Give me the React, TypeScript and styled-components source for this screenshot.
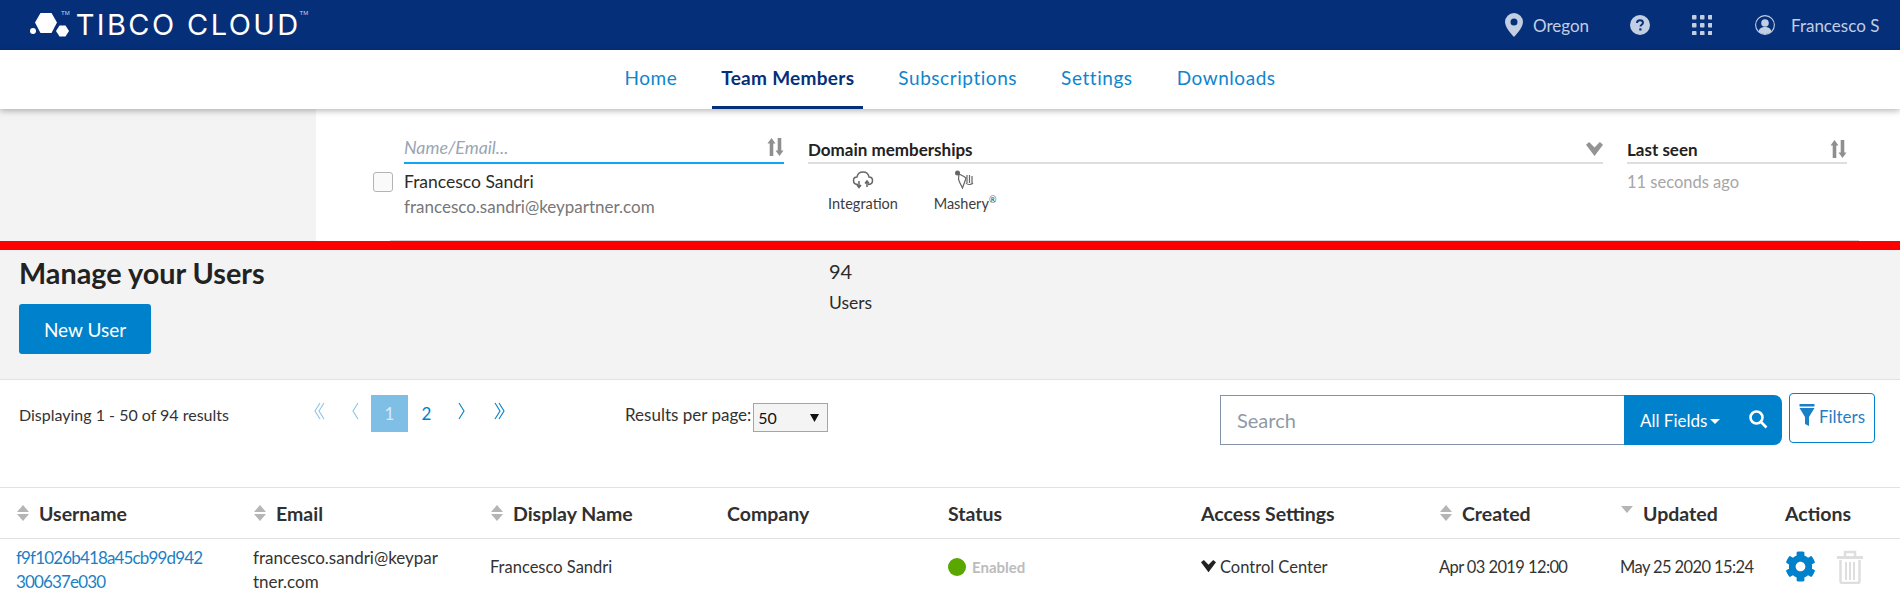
import { FC } from 'react'
import styled, { createGlobalStyle } from 'styled-components'
import { FaCog } from 'react-icons/fa'

const GlobalStyle = createGlobalStyle`
  html, body {
    margin: 0;
    padding: 0;
    background: #fff;
  }
  body {
    font-family: 'Lato', 'Noto Sans', sans-serif;
    font-size: 16px;
    color: #2b2b2b;
    overflow: hidden;
  }
  * {
    box-sizing: border-box;
  }
`

const Page = styled.div`
  width: 1900px;
  height: 597px;
  overflow: hidden;
`

const TopBar = styled.header`
  height: 50px;
  background: #062f7a;
  display: flex;
  align-items: center;
  justify-content: space-between;
  padding: 0 16px 0 30px;
`

const Brand = styled.div`
  display: flex;
  align-items: flex-start;
  color: #fff;
`

const BrandMark = styled.span`
  display: flex;
  margin-top: 3px;
`

const BrandText = styled.span`
  font-family: 'Inter', sans-serif;
  font-weight: 400;
  font-size: 29px;
  line-height: 34px;
  letter-spacing: 2.4px;
  margin: -1px 0 0 6px;
`

const Tm = styled.sup<{ $gap: number }>`
  font-family: 'Liberation Sans', sans-serif;
  font-size: 6px;
  line-height: 8px;
  margin: 0 0 0 ${p => p.$gap}px;
  color: #c8d3e6;
`

const TopActions = styled.div`
  display: flex;
  align-items: center;
  color: #c2cee2;
  font-size: 17px;
`

const TopItem = styled.div<{ $width: number; $gap?: number }>`
  display: flex;
  align-items: center;
  gap: ${p => p.$gap ?? 9}px;
  width: ${p => p.$width}px;
`

const NavBar = styled.nav`
  height: 59px;
  background: #fff;
  display: flex;
  justify-content: center;
  gap: 26px;
  box-shadow: 0 2px 6px rgba(0, 0, 0, 0.28);
  position: relative;
`

const NavItem = styled.a<{ $active?: boolean }>`
  display: flex;
  align-items: center;
  padding: 0 9px 2px;
  height: 59px;
  font-size: 19px;
  letter-spacing: ${p => (p.$active ? '0.3px' : '0.55px')};
  color: ${p => (p.$active ? '#062f7a' : '#0e85cd')};
  font-weight: ${p => (p.$active ? 700 : 400)};
  border-bottom: 3px solid ${p => (p.$active ? '#062f7a' : 'transparent')};
`

const Member = styled.section`
  height: 132px;
  display: flex;
  background: #fff;
`

const MemberSide = styled.div`
  width: 316px;
  background: #f3f3f3;
`

const MemberBody = styled.div`
  flex: 1;
  margin: 0 41px 0 74px;
  padding: 27px 0 0 14px;
  border-bottom: 1px solid #d6d6d6;
  display: grid;
  grid-template-columns: 380px 795px 220px;
  grid-template-rows: 28px auto;
  column-gap: 24px;
  row-gap: 6px;
`

const ColumnHead = styled.div<{ $focus?: boolean }>`
  display: flex;
  align-items: center;
  justify-content: space-between;
  border-bottom: 2px solid ${p => (p.$focus ? '#12a5f4' : '#dedede')};
  padding-bottom: ${p => (p.$focus ? '4px' : '0')};
  font-weight: 700;
  font-size: 17px;
  color: #222;
`

const Placeholder = styled.span`
  font-style: italic;
  font-weight: 400;
  font-size: 17.8px;
  color: #9aa5b5;
`

const NameCell = styled.div`
  display: flex;
  gap: 11px;
  margin: -1px 0 0 -31px;
`

const Check = styled.span`
  width: 20px;
  height: 20px;
  margin-top: 3px;
  border: 1px solid #b4b4b4;
  border-radius: 3px;
  background: #fafafa;
`

const NameBlock = styled.div`
  line-height: 25px;
  font-size: 17.5px;
`

const MutedLine = styled.div`
  color: #777;
  font-size: 17px;
`

const Domains = styled.div`
  display: flex;
  padding-left: 4px;
`

const Domain = styled.div`
  width: 102px;
  display: flex;
  flex-direction: column;
  align-items: center;
  gap: 5px;
  font-size: 14.5px;
  color: #3d3d3d;
`

const Registered = styled.sup`
  font-size: 9px;
  line-height: 0;
`

const Seen = styled.div`
  color: #a6a6a6;
  font-size: 16.5px;
  line-height: 25px;
`

const RedBar = styled.div`
  height: 9px;
  background: #ff0000;
`

const Manage = styled.section`
  height: 130px;
  background: #f3f3f3;
  border-bottom: 1px solid #e2e2e2;
  display: flex;
  padding-left: 19px;
`

const ManageLeft = styled.div`
  width: 810px;
`

const Title = styled.h1`
  margin: 4px 0 11px;
  font-size: 28.8px;
  line-height: 39px;
  font-weight: 700;
  color: #222;
`

const PrimaryButton = styled.button`
  width: 132px;
  height: 50px;
  border: 0;
  border-radius: 3px;
  background: #0081cb;
  color: #fff;
  font: inherit;
  font-size: 19px;
`

const Stat = styled.div`
  padding-top: 6px;
`

const StatValue = styled.div`
  font-size: 20px;
  line-height: 30px;
`

const StatLabel = styled.div`
  font-size: 17.5px;
  line-height: 34px;
`

const Toolbar = styled.section`
  height: 108px;
  border-bottom: 1px solid #e2e2e2;
  display: flex;
  padding: 13px 0 0 19px;
`

const ResultCount = styled.div`
  width: 276px;
  line-height: 44px;
  font-size: 16px;
  color: #333;
`

const Pager = styled.div`
  width: 330px;
  height: 37px;
  margin-top: 2px;
  display: flex;
  align-items: center;
`

const PageArrow = styled.span<{ $faint?: boolean; $width: number }>`
  width: ${p => p.$width}px;
  display: flex;
  justify-content: center;
  color: #0081cb;
  opacity: ${p => (p.$faint ? 0.45 : 1)};
  margin-top: -5px;
`

const PageNumber = styled.span<{ $current?: boolean }>`
  width: 37px;
  height: 37px;
  display: flex;
  align-items: center;
  justify-content: center;
  font-size: 17px;
  color: ${p => (p.$current ? '#d6ebf8' : '#0081cb')};
  background: ${p => (p.$current ? '#80bfe5' : 'transparent')};
`

const PerPage = styled.div`
  width: 595px;
  display: flex;
  align-items: flex-start;
  gap: 2px;
  line-height: 44px;
  font-size: 17px;
  color: #333;
`

const FakeSelect = styled.div`
  width: 75px;
  height: 29px;
  margin-top: 10px;
  border: 1px solid #a5a5a5;
  background: #f4f4f4;
  display: flex;
  align-items: center;
  justify-content: space-between;
  padding: 0 8px 0 4px;
  line-height: 27px;
  font-size: 16px;
  color: #111;
`

const SearchBox = styled.div`
  width: 562px;
  height: 50px;
  margin-top: 2px;
  display: flex;
`

const SearchField = styled.div`
  flex: 1;
  border: 1px solid #8292a8;
  border-right: 0;
  padding-left: 16px;
  line-height: 48px;
  font-size: 20px;
  color: #8f99a8;
`

const SearchAction = styled.div`
  width: 158px;
  background: #0081cb;
  border-radius: 0 8px 8px 0;
  color: #fff;
  display: flex;
  align-items: center;
  padding-left: 16px;
  font-size: 17px;
`

const Caret = styled.span`
  width: 0;
  height: 0;
  margin: 3px 0 0 3px;
  border-left: 5px solid transparent;
  border-right: 5px solid transparent;
  border-top: 5px solid #fff;
`

const SearchGlyph = styled.span`
  display: flex;
  margin-left: 28px;
  margin-top: -3px;
`

const FilterButton = styled.div`
  width: 86px;
  height: 50px;
  margin: 0 0 0 7px;
  padding-bottom: 4px;
  border: 1px solid #0081cb;
  border-radius: 4px;
  color: #2a7cc0;
  display: flex;
  align-items: center;
  justify-content: center;
  gap: 4px;
  font-size: 17px;
`

const TableRow = styled.div<{ $head?: boolean }>`
  display: grid;
  grid-template-columns: 237px 237px 237px 221px 253px 238px 181px 165px 115px;
  padding-left: 16px;
  align-items: center;
  height: ${p => (p.$head ? '51px' : '53px')};
  border-bottom: ${p => (p.$head ? '1px solid #e2e2e2' : '0')};
`

const HeadCell = styled.div`
  display: flex;
  align-items: center;
  gap: 9px;
  font-size: 19.5px;
  font-weight: 700;
  color: #303030;
`

const Cell = styled.div`
  font-size: 16.5px;
  line-height: 24px;
  color: #333;
`

const LinkCell = styled(Cell)`
  font-size: 17px;
  color: #1c7fc4;
  padding-top: 7px;
  letter-spacing: -0.85px;
`

const WrapCell = styled(Cell)`
  font-size: 17px;
  padding-top: 7px;
`

const DateCell = styled(Cell)`
  letter-spacing: -0.6px;
`

const StatusDot = styled.span`
  width: 18px;
  height: 18px;
  border-radius: 50%;
  background: #5aa700;
`

const StatusCell = styled(Cell)`
  display: flex;
  align-items: center;
  gap: 6px;
  font-size: 15px;
  font-weight: 700;
  color: #bcbcbc;
`

const AccessCell = styled(Cell)`
  display: flex;
  align-items: center;
  gap: 4px;
`

const ActionsCell = styled.div`
  display: flex;
  align-items: center;
  gap: 21px;
  color: #0081cb;
`

const SortArrows: FC<{ down?: boolean }> = ({ down }) => (
  <svg width="14" height="20" viewBox="0 0 14 20">
    {!down && <path d="M7 2l6 7H1z" fill="#b5b5b5" />}
    <path d="M1 11h12l-6 7z" fill="#b5b5b5" transform={down ? 'translate(0 -8)' : undefined} />
  </svg>
)

const SwapArrows = () => (
  <svg width="17" height="20" viewBox="0 0 17 20" fill="#8f8f8f">
    <path d="M4.500 1l4 5.500H6.300V19H2.700V6.500H.5z" />
    <path d="M12.500 19l-4-5.500h2.200V1h3.600v12.500h2.200z" />
  </svg>
)

const BoldChevron: FC<{ size: number; color: string }> = ({ size, color }) => (
  <svg width={size} height={size} viewBox="0 0 16 16" fill={color}>
    <path d="M0 3.500L3 1l5 5 5-5 3 2.500L8 14z" />
  </svg>
)

const Chevrons: FC<{ dir: 'left' | 'right'; count: 1 | 2 }> = ({ dir, count }) => (
  <svg
    width="18"
    height="20"
    viewBox="0 0 18 20"
    fill="none"
    stroke="currentColor"
    strokeWidth="1.1"
    transform={dir === 'left' ? 'scale(-1 1)' : undefined}
  >
    <path d="M7 2l5 8-5 8" />
    {count === 2 && <path d="M3 2l5 8-5 8" />}
  </svg>
)

const Hexagons = () => (
  <svg width="39" height="26" viewBox="0 0 39 26" fill="#fff">
    <path d="M10.500 1h11L27 10.500 21.500 21h-11L5 10.500z" />
    <path d="M29.500 13.500h6L39 19l-3.500 5.500h-6L26 19z" />
    <circle cx="3" cy="19" r="3" />
  </svg>
)

const PinIcon = () => (
  <svg width="20" height="26" viewBox="0 0 20 26">
    <path
      fillRule="evenodd"
      fill="#c2cee2"
      d="M10 1a9 9 0 0 1 9 9c0 6-9 15-9 15S1 16 1 10a9 9 0 0 1 9-9zm0 5.500a3.500 3.500 0 1 0 0 7 3.500 3.500 0 0 0 0-7z"
    />
  </svg>
)

const HelpIcon = () => (
  <svg width="20" height="20" viewBox="0 0 20 20">
    <circle cx="10" cy="10" r="10" fill="#c2cee2" />
    <path
      d="M7 8c0-1.800 1.300-2.800 3-2.800s3 1 3 2.500c0 2-2.600 2-2.600 3.800"
      fill="none"
      stroke="#062f7a"
      strokeWidth="1.900"
    />
    <rect x="9.300" y="13.300" width="2.200" height="2.200" fill="#062f7a" />
  </svg>
)

const GridIcon = () => (
  <svg width="20" height="20" viewBox="0 0 20 20" fill="#c2cee2">
    {[0, 8, 16].map(y =>
      [0, 8, 16].map(x => <rect key={`${x}-${y}`} x={x} y={y} width="4.500" height="4.500" rx="0.800" />)
    )}
  </svg>
)

const UserIcon = () => (
  <svg width="20" height="20" viewBox="0 0 20 20">
    <circle cx="10" cy="10" r="9.400" fill="none" stroke="#c2cee2" strokeWidth="1.100" />
    <circle cx="10" cy="8" r="3.800" fill="#c2cee2" />
    <path d="M3.500 16.500c1-3.500 3.500-4.500 6.500-4.500s5.500 1 6.500 4.500A9 9 0 0 1 10 19a9 9 0 0 1-6.500-2.500z" fill="#c2cee2" />
  </svg>
)

const CloudIcon = () => (
  <svg width="22" height="20" viewBox="0 0 22 20" fill="none" stroke="#666" strokeWidth="1.500">
    <path d="M6 14.500C3 14.500 1.500 12.500 1.500 10.500S3 7 5 7c.5-3 3-5 6-5s5.500 2 6 5c2 0 3.500 1.500 3.500 3.500s-1.500 4-4.500 4" />
    <path d="M7 11v6M5 15l2 2.500L9 15M15 17v-6M13 13.500l2-2.500 2 2.500" />
  </svg>
)

const MasheryIcon = () => (
  <svg width="22" height="20" viewBox="0 0 22 20" fill="none" stroke="#666" strokeWidth="1.200">
    <circle cx="3.500" cy="3" r="2.500" fill="#666" stroke="none" />
    <path d="M5 4l5 2.500 2 1.500-1 3-2.500 7-3-6-1-3z" />
    <path d="M13 5v8M15.500 5v8M18 6v7M12 13c1.500 2 5 2 7 0" />
  </svg>
)

const SearchIcon = () => (
  <svg width="20" height="20" viewBox="0 0 20 20" fill="none" stroke="#fff" strokeWidth="2.600">
    <circle cx="8.500" cy="8.500" r="6" />
    <path d="M13 13l5.500 5.500" />
  </svg>
)

const FunnelIcon = () => (
  <svg width="16" height="24" viewBox="0 0 16 24" fill="#1a80c8">
    <rect x="0.500" y="0" width="15" height="2.500" />
    <path d="M0.500 4h15L10 13v9l-4-2v-7z" />
  </svg>
)

const TrashIcon = () => (
  <svg width="26" height="34" viewBox="0 0 26 34" fill="none" stroke="#dedede">
    <path d="M0 7.500h26" strokeWidth="3" />
    <path d="M8 6V2h10v4" strokeWidth="2.500" />
    <path d="M3.500 10v21a2 2 0 0 0 2 2h15a2 2 0 0 0 2-2V10" strokeWidth="2.500" />
    <path d="M9 12v18M13 12v18M17 12v18" strokeWidth="2" />
  </svg>
)

const App: FC = () => (
  <Page>
    <GlobalStyle />
    <TopBar>
      <Brand>
        <BrandMark>
          <Hexagons />
        </BrandMark>
        <Tm $gap={-8}>TM</Tm>
        <BrandText>TIBCO CLOUD</BrandText>
        <Tm $gap={-1}>TM</Tm>
      </Brand>
      <TopActions>
        <TopItem $width={126}>
          <PinIcon />
          Oregon
        </TopItem>
        <TopItem $width={62}>
          <HelpIcon />
        </TopItem>
        <TopItem $width={63}>
          <GridIcon />
        </TopItem>
        <TopItem $width={129} $gap={16}>
          <UserIcon />
          <span>Francesco S</span>
        </TopItem>
      </TopActions>
    </TopBar>

    <NavBar>
      <NavItem>Home</NavItem>
      <NavItem $active>Team Members</NavItem>
      <NavItem>Subscriptions</NavItem>
      <NavItem>Settings</NavItem>
      <NavItem>Downloads</NavItem>
    </NavBar>

    <Member>
      <MemberSide />
      <MemberBody>
        <ColumnHead $focus>
          <Placeholder>Name/Email...</Placeholder>
          <SwapArrows />
        </ColumnHead>
        <ColumnHead>
          Domain memberships
          <BoldChevron size={17} color="#949494" />
        </ColumnHead>
        <ColumnHead>
          Last seen
          <SwapArrows />
        </ColumnHead>
        <NameCell>
          <Check />
          <NameBlock>
            <div>Francesco Sandri</div>
            <MutedLine>francesco.sandri@keypartner.com</MutedLine>
          </NameBlock>
        </NameCell>
        <Domains>
          <Domain>
            <CloudIcon />
            Integration
          </Domain>
          <Domain>
            <MasheryIcon />
            <span>
              Mashery<Registered>®</Registered>
            </span>
          </Domain>
        </Domains>
        <Seen>11 seconds ago</Seen>
      </MemberBody>
    </Member>

    <RedBar />

    <Manage>
      <ManageLeft>
        <Title>Manage your Users</Title>
        <PrimaryButton>New User</PrimaryButton>
      </ManageLeft>
      <Stat>
        <StatValue>94</StatValue>
        <StatLabel>Users</StatLabel>
      </Stat>
    </Manage>

    <Toolbar>
      <ResultCount>Displaying 1 - 50 of 94 results</ResultCount>
      <Pager>
        <PageArrow $faint $width={45}>
          <Chevrons dir="left" count={2} />
        </PageArrow>
        <PageArrow $faint $width={31}>
          <Chevrons dir="left" count={1} />
        </PageArrow>
        <PageNumber $current>1</PageNumber>
        <PageNumber>2</PageNumber>
        <PageArrow $width={32}>
          <Chevrons dir="right" count={1} />
        </PageArrow>
        <PageArrow $width={47}>
          <Chevrons dir="right" count={2} />
        </PageArrow>
      </Pager>
      <PerPage>
        Results per page:
        <FakeSelect>
          50
          <svg width="9" height="8" viewBox="0 0 9 8">
            <path d="M0 0h9L4.500 8z" fill="#111" />
          </svg>
        </FakeSelect>
      </PerPage>
      <SearchBox>
        <SearchField>Search</SearchField>
        <SearchAction>
          All Fields
          <Caret />
          <SearchGlyph>
            <SearchIcon />
          </SearchGlyph>
        </SearchAction>
      </SearchBox>
      <FilterButton>
        <FunnelIcon />
        Filters
      </FilterButton>
    </Toolbar>

    <TableRow $head>
      <HeadCell>
        <SortArrows />
        Username
      </HeadCell>
      <HeadCell>
        <SortArrows />
        Email
      </HeadCell>
      <HeadCell>
        <SortArrows />
        Display Name
      </HeadCell>
      <HeadCell>Company</HeadCell>
      <HeadCell>Status</HeadCell>
      <HeadCell>Access Settings</HeadCell>
      <HeadCell>
        <SortArrows />
        Created
      </HeadCell>
      <HeadCell>
        <SortArrows down />
        Updated
      </HeadCell>
      <HeadCell>Actions</HeadCell>
    </TableRow>

    <TableRow>
      <LinkCell>
        f9f1026b418a45cb99d942
        <br />
        300637e030
      </LinkCell>
      <WrapCell>
        francesco.sandri@keypar
        <br />
        tner.com
      </WrapCell>
      <Cell>Francesco Sandri</Cell>
      <Cell />
      <StatusCell>
        <StatusDot />
        Enabled
      </StatusCell>
      <AccessCell>
        <BoldChevron size={15} color="#222" />
        Control Center
      </AccessCell>
      <DateCell>Apr 03 2019 12:00</DateCell>
      <DateCell>May 25 2020 15:24</DateCell>
      <ActionsCell>
        <FaCog size={31} />
        <TrashIcon />
      </ActionsCell>
    </TableRow>
  </Page>
)

export default App
